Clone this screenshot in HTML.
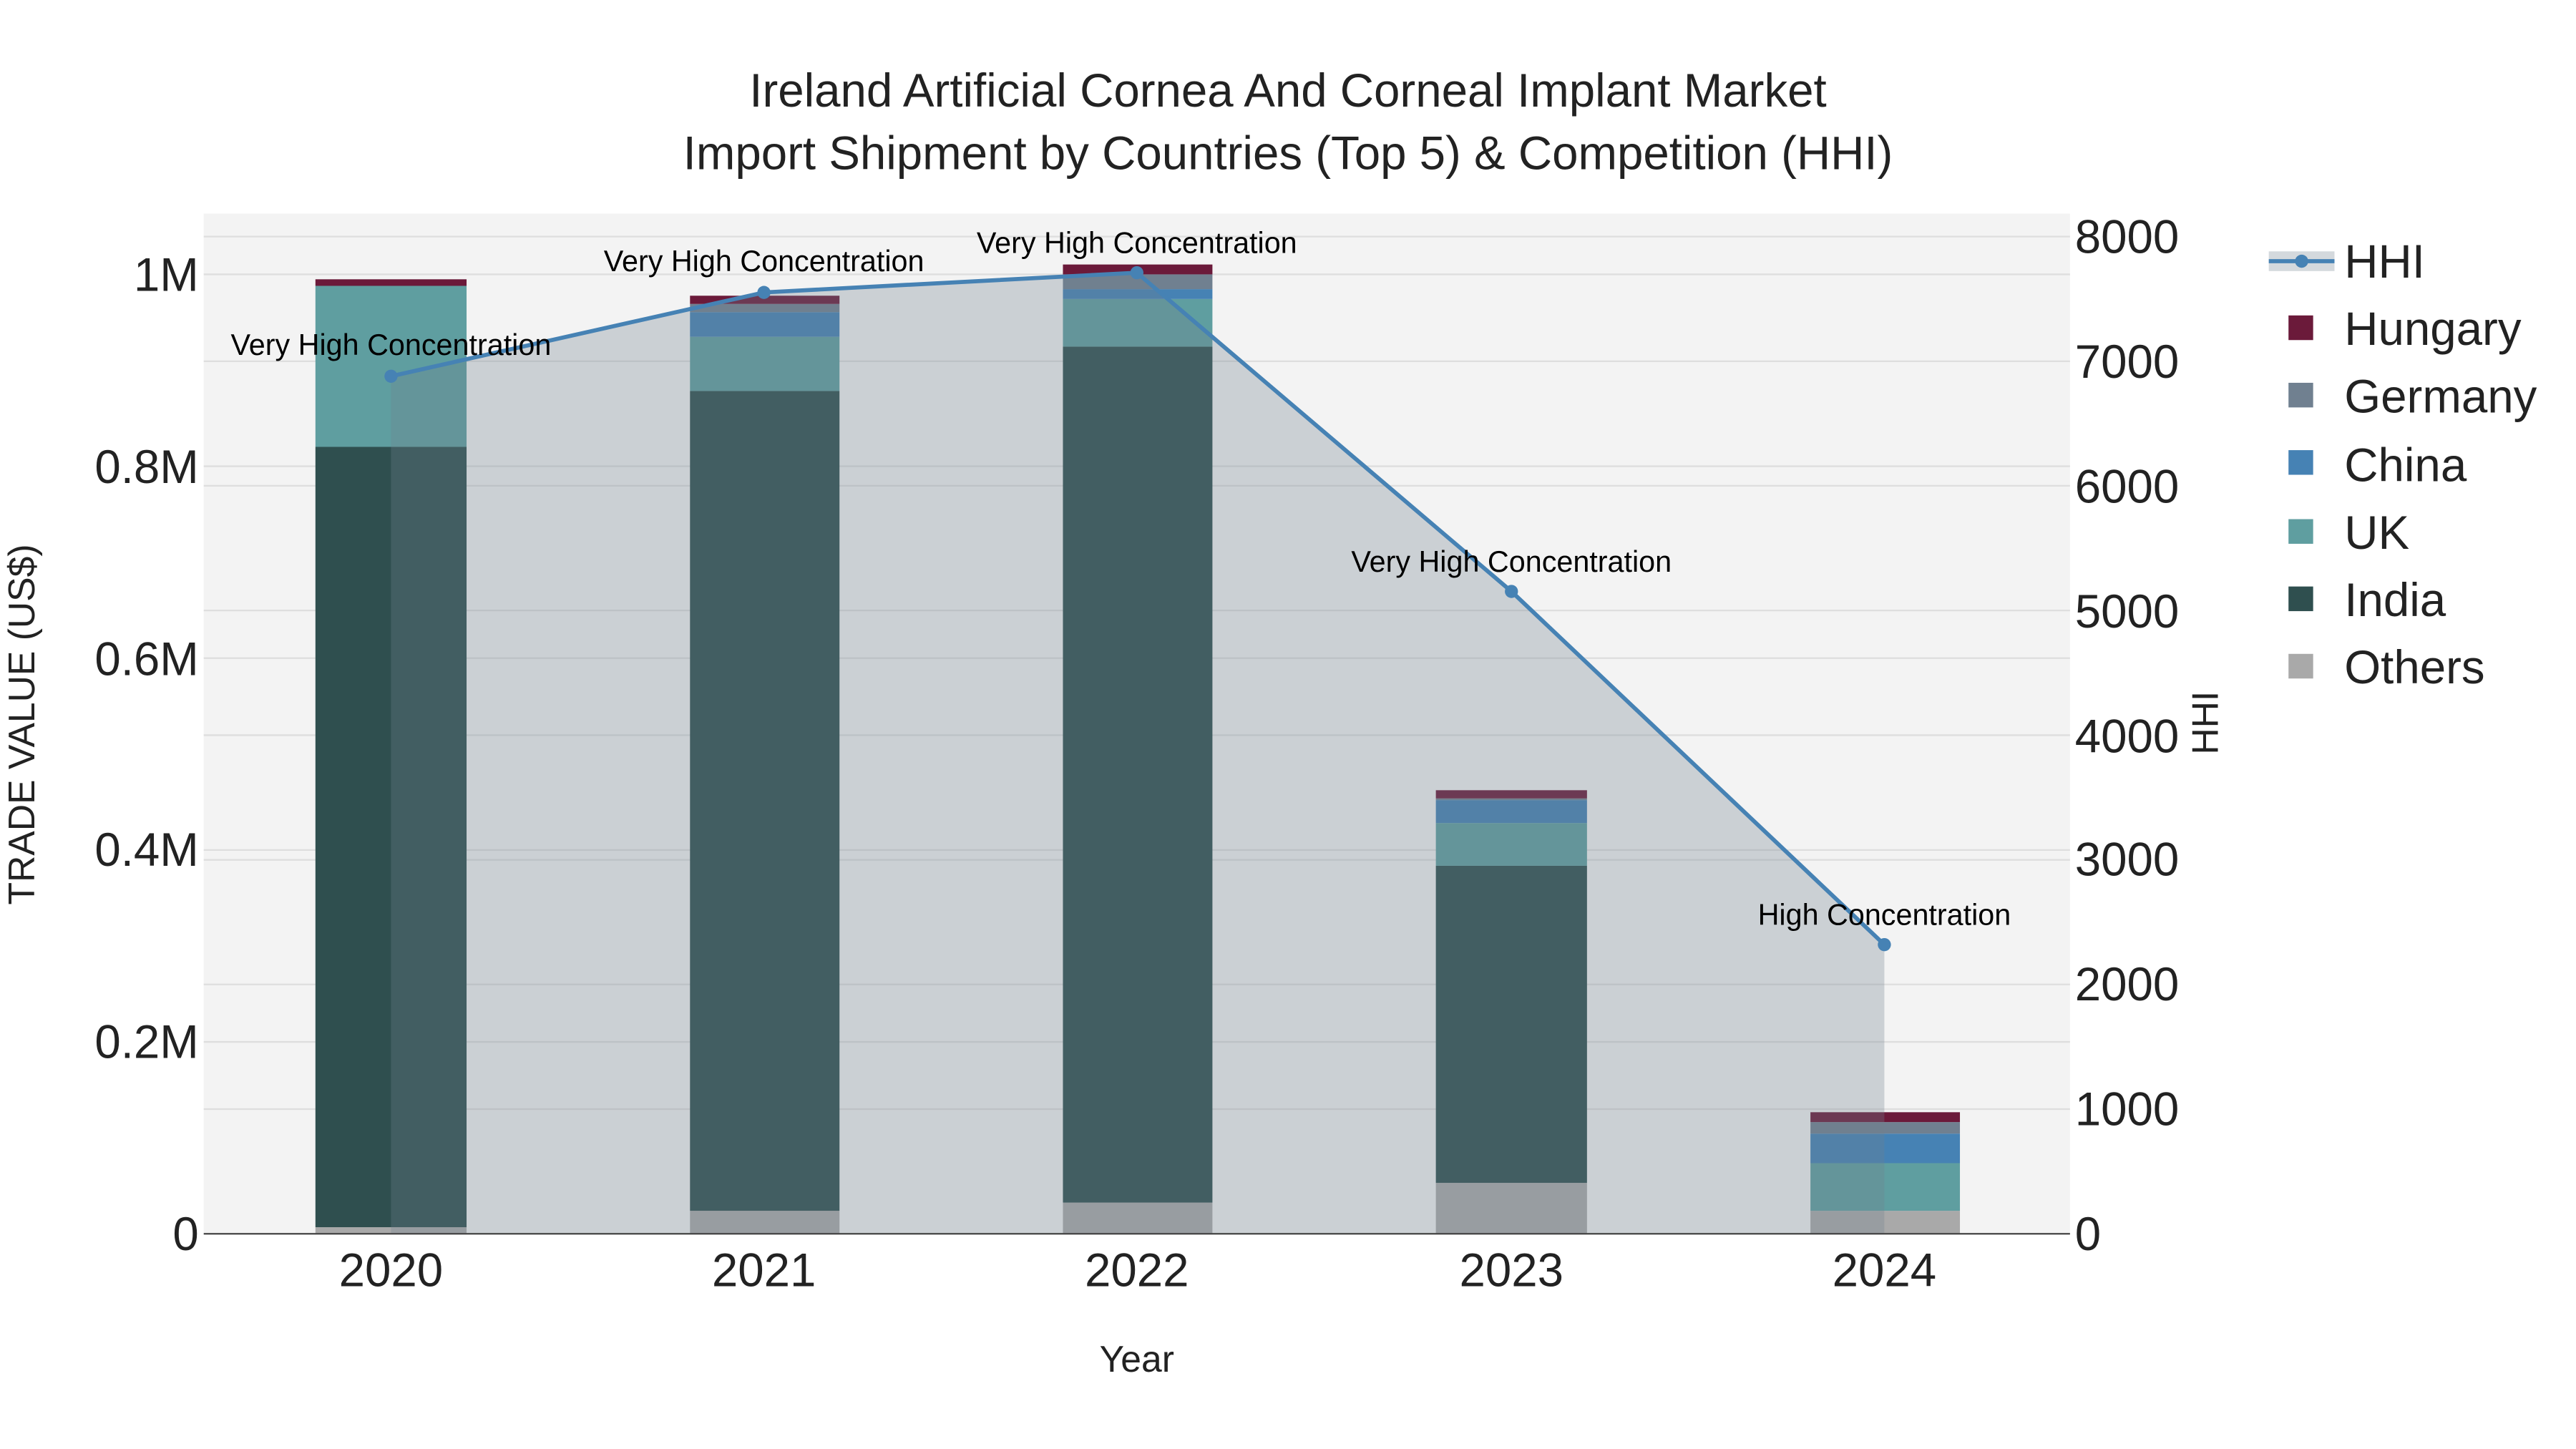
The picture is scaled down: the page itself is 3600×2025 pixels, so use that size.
<!DOCTYPE html>
<html><head><meta charset="utf-8"><style>html,body{margin:0;padding:0;background:#fff}svg{display:block}</style></head><body>
<svg width="3600" height="2025" viewBox="0 0 1568 882" preserveAspectRatio="none" xmlns="http://www.w3.org/2000/svg" font-family="Liberation Sans, sans-serif">
<rect x="0" y="0" width="1568" height="882" fill="#fff"/>
<rect x="124" y="130" width="1136" height="621" fill="#f3f3f3"/>
<g stroke="#dedede" stroke-width="1">
<line x1="124" x2="1260" y1="634.2" y2="634.2"/><line x1="124" x2="1260" y1="517.4" y2="517.4"/><line x1="124" x2="1260" y1="400.6" y2="400.6"/><line x1="124" x2="1260" y1="283.8" y2="283.8"/><line x1="124" x2="1260" y1="167" y2="167"/>
<line x1="124" x2="1260" y1="675.1" y2="675.1"/><line x1="124" x2="1260" y1="599.2" y2="599.2"/><line x1="124" x2="1260" y1="523.4" y2="523.4"/><line x1="124" x2="1260" y1="447.5" y2="447.5"/><line x1="124" x2="1260" y1="371.6" y2="371.6"/><line x1="124" x2="1260" y1="295.7" y2="295.7"/><line x1="124" x2="1260" y1="219.9" y2="219.9"/><line x1="124" x2="1260" y1="144" y2="144"/>
</g>
<g>
<rect x="192" y="747" width="92" height="4" fill="#a9a9a9"/><rect x="192" y="272" width="92" height="475" fill="#2f4f4f"/><rect x="192" y="174" width="92" height="98" fill="#5f9ea0"/><rect x="192" y="170" width="92" height="4" fill="#6b1a3a"/>
<rect x="420" y="737" width="91" height="14" fill="#a9a9a9"/><rect x="420" y="238" width="91" height="499" fill="#2f4f4f"/><rect x="420" y="205" width="91" height="33" fill="#5f9ea0"/><rect x="420" y="190" width="91" height="15" fill="#4682b4"/><rect x="420" y="185" width="91" height="5" fill="#708090"/><rect x="420" y="180" width="91" height="5" fill="#6b1a3a"/>
<rect x="647" y="732" width="91" height="19" fill="#a9a9a9"/><rect x="647" y="211" width="91" height="521" fill="#2f4f4f"/><rect x="647" y="182" width="91" height="29" fill="#5f9ea0"/><rect x="647" y="176" width="91" height="6" fill="#4682b4"/><rect x="647" y="167" width="91" height="9" fill="#708090"/><rect x="647" y="161" width="91" height="6" fill="#6b1a3a"/>
<rect x="874" y="720" width="92" height="31" fill="#a9a9a9"/><rect x="874" y="527" width="92" height="193" fill="#2f4f4f"/><rect x="874" y="501" width="92" height="26" fill="#5f9ea0"/><rect x="874" y="487" width="92" height="14" fill="#4682b4"/><rect x="874" y="486" width="92" height="1" fill="#708090"/><rect x="874" y="481" width="92" height="5" fill="#6b1a3a"/>
<rect x="1102" y="737" width="91" height="14" fill="#a9a9a9"/><rect x="1102" y="708" width="91" height="29" fill="#5f9ea0"/><rect x="1102" y="690" width="91" height="18" fill="#4682b4"/><rect x="1102" y="683" width="91" height="7" fill="#708090"/><rect x="1102" y="677" width="91" height="6" fill="#6b1a3a"/>
</g>
<polygon points="238,751 238,229 465,178 692,166 920,360 1147,575 1147,751" fill="rgba(112,128,144,0.3)"/>
<line x1="124" x2="1260" y1="751" y2="751" stroke="#444" stroke-width="1"/>
<polyline points="238,229 465,178 692,166 920,360 1147,575" fill="none" stroke="#4682b4" stroke-width="2.5"/>
<g fill="#4682b4"><circle cx="238" cy="229" r="4"/><circle cx="465" cy="178" r="4"/><circle cx="692" cy="166" r="4"/><circle cx="920" cy="360" r="4"/><circle cx="1147" cy="575" r="4"/></g>
<g font-size="18" text-anchor="middle" fill="#000">
<text x="238" y="216">Very High Concentration</text><text x="465" y="165">Very High Concentration</text><text x="692" y="154">Very High Concentration</text><text x="920" y="348">Very High Concentration</text><text x="1147" y="563">High Concentration</text>
</g>
<g font-size="28.5" text-anchor="middle" fill="#222">
<text x="784" y="65">Ireland Artificial Cornea And Corneal Implant Market</text>
<text x="784" y="103">Import Shipment by Countries (Top 5) &amp; Competition (HHI)</text>
</g>
<g font-size="28.5" text-anchor="end" fill="#222">
<text x="121" y="761">0</text><text x="121" y="644">0.2M</text><text x="121" y="527">0.4M</text><text x="121" y="411">0.6M</text><text x="121" y="294">0.8M</text><text x="121" y="177">1M</text>
</g>
<g font-size="28.5" text-anchor="start" fill="#222">
<text x="1263" y="761">0</text><text x="1263" y="685">1000</text><text x="1263" y="609">2000</text><text x="1263" y="533">3000</text><text x="1263" y="458">4000</text><text x="1263" y="382">5000</text><text x="1263" y="306">6000</text><text x="1263" y="230">7000</text><text x="1263" y="154">8000</text>
</g>
<g font-size="28.5" text-anchor="middle" fill="#222">
<text x="238" y="783">2020</text><text x="465" y="783">2021</text><text x="692" y="783">2022</text><text x="920" y="783">2023</text><text x="1147" y="783">2024</text>
</g>
<text x="692" y="835" font-size="22.5" text-anchor="middle" fill="#222">Year</text>
<text transform="translate(21,441) rotate(-90)" font-size="22.5" text-anchor="middle" fill="#222">TRADE VALUE (US$)</text>
<text transform="translate(1350,440) rotate(-90)" font-size="22.5" text-anchor="middle" fill="#222">HHI</text>
<g>
<rect x="1381" y="153" width="40" height="12" fill="rgba(112,128,144,0.3)"/>
<line x1="1381" x2="1421" y1="159" y2="159" stroke="#4682b4" stroke-width="2.5"/><circle cx="1401" cy="159" r="4" fill="#4682b4"/>
<rect x="1393" y="192" width="15" height="15" fill="#6b1a3a"/>
<rect x="1393" y="233" width="15" height="15" fill="#708090"/>
<rect x="1393" y="274" width="15" height="15" fill="#4682b4"/>
<rect x="1393" y="316" width="15" height="15" fill="#5f9ea0"/>
<rect x="1393" y="357" width="15" height="15" fill="#2f4f4f"/>
<rect x="1393" y="398" width="15" height="15" fill="#a9a9a9"/>
</g>
<g font-size="28.5" fill="#222">
<text x="1427" y="169">HHI</text><text x="1427" y="210">Hungary</text><text x="1427" y="251">Germany</text><text x="1427" y="293">China</text><text x="1427" y="334">UK</text><text x="1427" y="375">India</text><text x="1427" y="416">Others</text>
</g>
</svg>
</body></html>
